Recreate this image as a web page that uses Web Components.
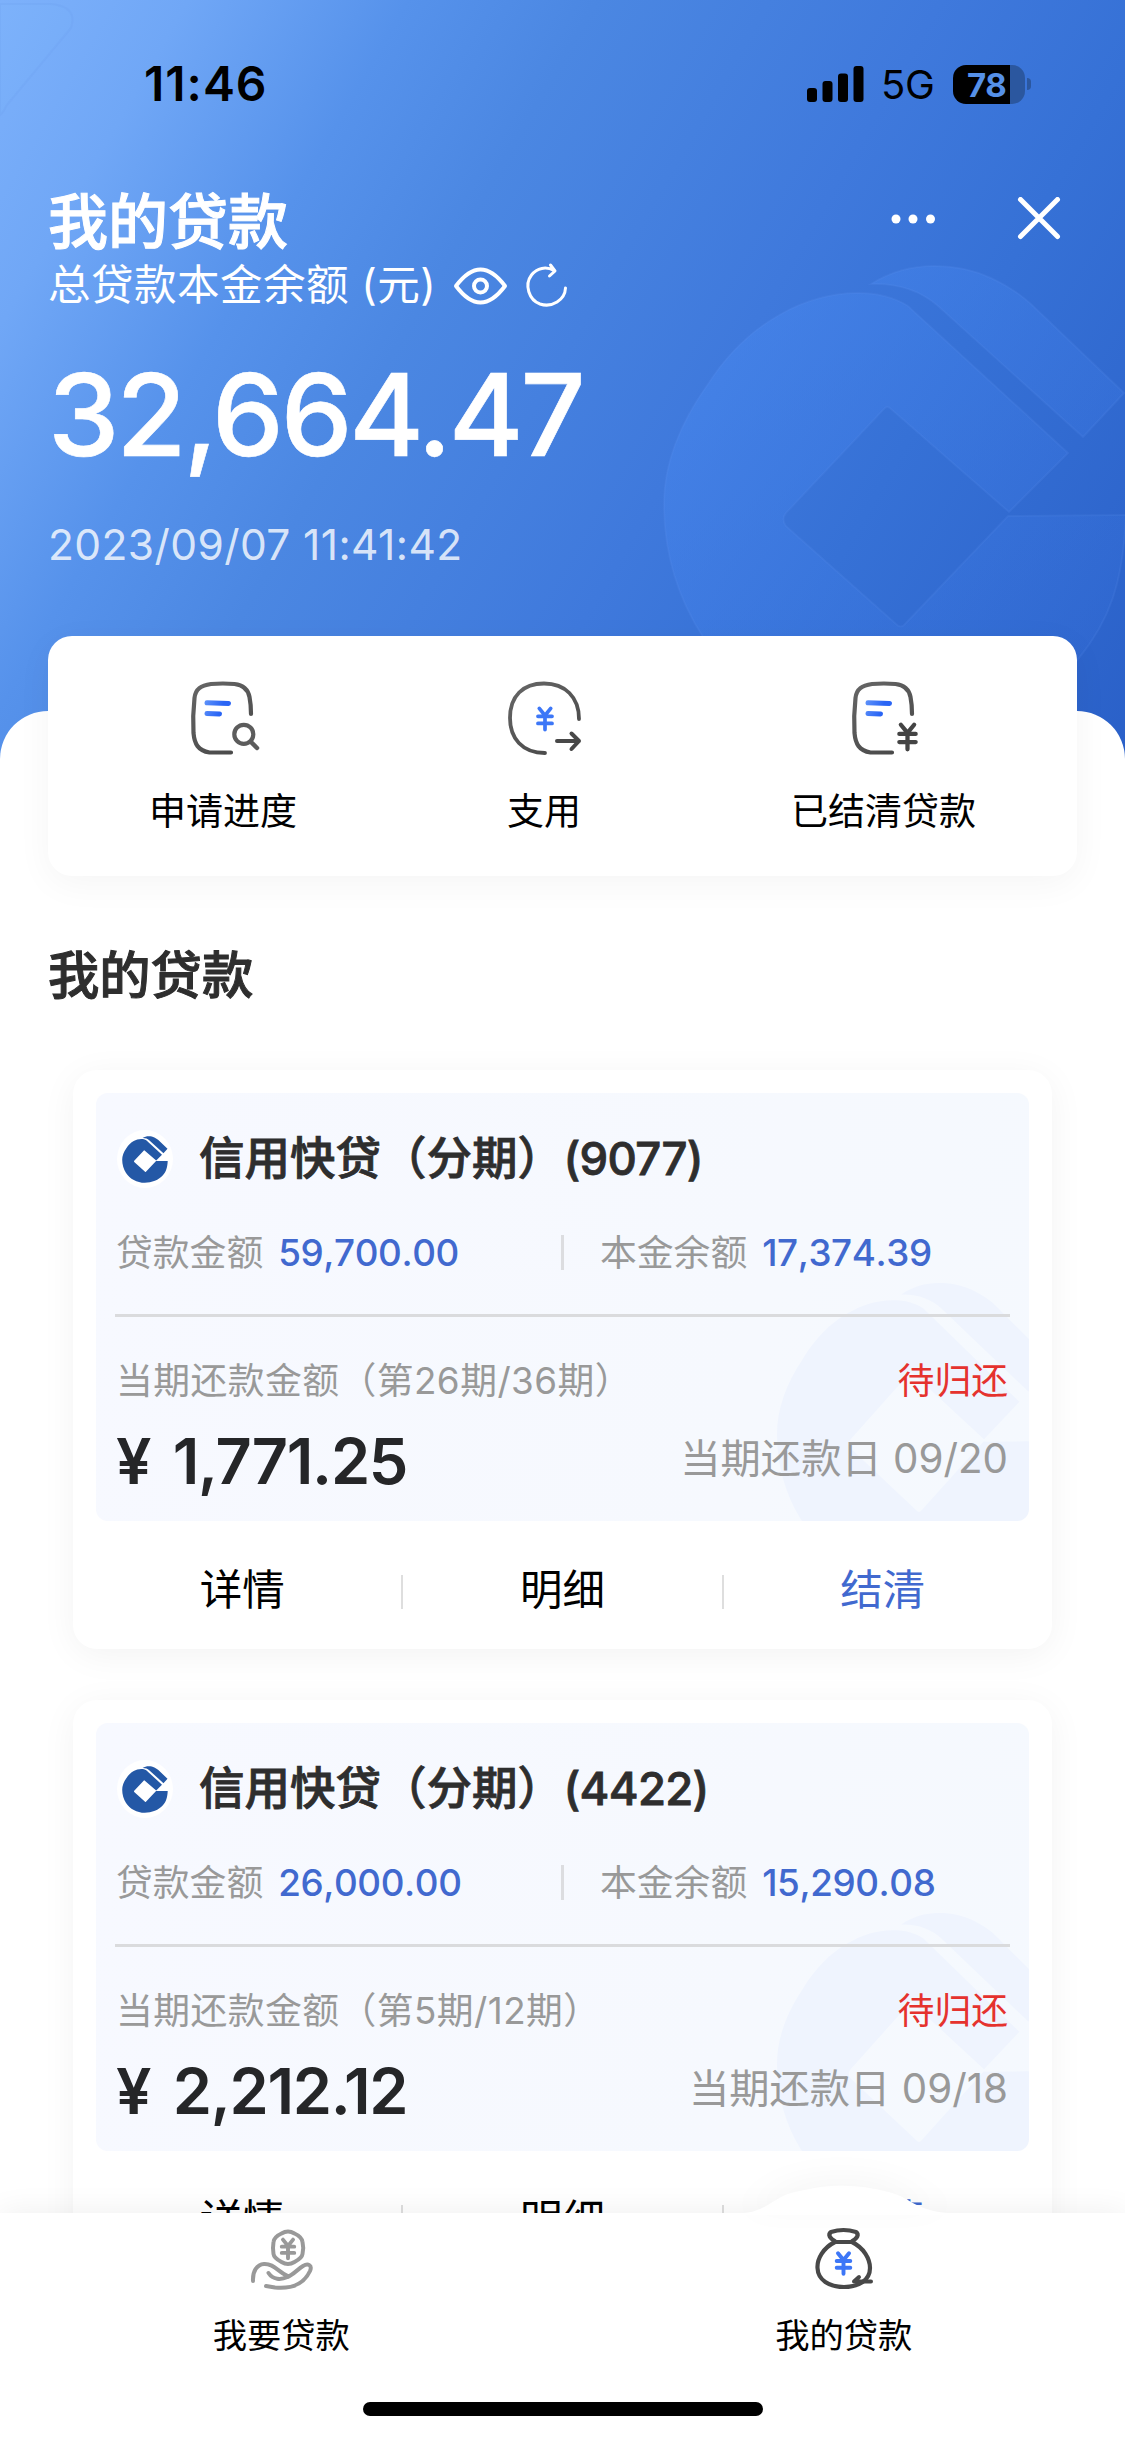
<!DOCTYPE html>
<html lang="zh-CN">
<head>
<meta charset="utf-8">
<title>我的贷款</title>
<style>
html,body{margin:0;padding:0}
body{width:1125px;height:2439px;overflow:hidden;background:#fff;font-family:Inter,"Noto Sans CJK SC",sans-serif;color:#000}
</style>
</head>
<body>
<loan-app></loan-app>
<script>
const LOGO_MAIN='M907 305C893 296 876 292 857 292C829 292 803 300 780 313C751 329 727 352 707 383C677 425 663 465 663 503C663 552 677 597 702 636C740 695 812 735 893 735C960 735 1036 708 1078 657C1108 620 1122 583 1125 514L1007 515L904 623Q900 628 895 623L785 525Q780 518 785 512L883 408Q886 404 890 408L1008 511L1067 452Z';
const LOGO_BAND='M870 283C889 271 910 265 933 265C955 265 973 269 990 277C1005 284 1018 292 1030 303L1123 392L1082 436L937 305C920 290 897 282 870 283Z';
const def=(name,html)=>customElements.define(name,class extends HTMLElement{
  constructor(){super();this.attachShadow({mode:'open'});}
  connectedCallback(){this.shadowRoot.innerHTML=typeof html==='function'?html(this):html;}
});
const yen=(x,y,s,c,w)=>`<g transform="translate(${x} ${y}) scale(${s})" fill="none" stroke="${c}" stroke-width="${w}" stroke-linecap="round"><path d="M-6.5 -12L0 -4L6.5 -12M0 -4V12M-8 -3H8M-8 5H8"/></g>`;

def('status-bar',`<style>
:host{display:flex;height:168px;align-items:center;justify-content:space-between;padding:0 94px 0 144px;box-sizing:border-box;color:#000}
.time{font-size:48px;font-weight:600;line-height:60px;letter-spacing:1px}
.right{display:flex;align-items:center}
.net{font-size:40px;line-height:48px;margin:2px 19px 0 17px;width:53px;letter-spacing:-.3px}
.bat{display:flex;align-items:center}
.body{box-sizing:border-box;width:72px;height:39px;border-radius:13px;background:linear-gradient(90deg,#000 57px,#2b579f 57px);color:#5590e8;font-size:33px;font-weight:700;line-height:40px;padding-left:14px;letter-spacing:-.5px}
.tip{width:4px;height:12px;margin-left:2px;border-radius:0 4px 4px 0;background:#2b579f}
</style>
<span class="time">11:46</span>
<div class="right">
<svg width="57" height="36" viewBox="0 0 57 36"><rect x="0" y="22" width="10" height="14" rx="3"/><rect x="15.5" y="15" width="10" height="21" rx="3"/><rect x="31" y="7.5" width="10" height="28.5" rx="3"/><rect x="46.5" y="0" width="10" height="36" rx="3"/></svg>
<span class="net">5G</span><div class="bat"><div class="body">78</div><div class="tip"></div></div></div>`);

def('loan-header',`<style>
:host{display:block;height:711px;color:#fff}
.nav{display:flex;align-items:center;justify-content:space-between;height:78px;margin-top:12px;padding:0 63px 0 48px}
h1{margin:5px 0 0;font-size:60px;line-height:76px;font-weight:500;-webkit-text-stroke:1px #fff}
.sub{display:flex;align-items:center;height:54px;padding-left:48px;font-size:42.6px;line-height:54px;letter-spacing:.4px}
.sub span{width:386px;white-space:nowrap}
.total{margin:43px 0 0 48px;font-size:114px;line-height:120px;height:120px;font-weight:500;letter-spacing:-3.1px;-webkit-text-stroke:.6px #fff}
.date{margin:44.5px 0 0 48px;font-size:42.5px;line-height:50px;letter-spacing:.4px;color:rgba(255,255,255,.8)}
</style>
<status-bar></status-bar>
<div class="nav"><h1>我的贷款</h1>
<svg width="172" height="44" viewBox="0 0 172 44"><g fill="#fff"><circle cx="6" cy="22" r="4.5"/><circle cx="23" cy="22" r="4.5"/><circle cx="40.5" cy="22" r="4.5"/></g><path d="M130.500 2.500L167.500 39.500M167.500 2.500L130.500 39.500" stroke="#fff" stroke-width="5" stroke-linecap="round"/></svg></div>
<div class="sub"><span>总贷款本金余额 (元)</span>
<svg width="140" height="54" viewBox="0 0 140 54" fill="none" stroke="#fff" stroke-linecap="round" stroke-linejoin="round"><path d="M22 28C31 16 38 11.500 46.500 11.500S62 16 71 28C62 40 55 44.500 46.500 44.500S31 40 22 28Z" stroke-width="4"/><circle cx="46.500" cy="28" r="6.500" stroke-width="4"/><path d="M120 12.500C112 8 103 10 97.500 17C90 27 95 42 106 46C118 50 131 42 131.500 30M116.500 7L121 13L115.500 18" stroke-width="3"/></svg></div>
<div class="total">32,664.47</div>
<div class="date">2023/09/07 11:41:42</div>`);

const doc='<path d="M68 36C68 30 67.500 24 66.500 19C65 11 60 7 51.500 6Q40 5 28 6C18 7.500 12.500 11 11.500 20Q9.500 38 10.500 55C11.500 66 15 72.500 26.500 74.500H48" fill="none" stroke="url(#g)" stroke-width="4.200" stroke-linecap="round"/><path d="M24 24.800L45.500 25.500M24 35.400L36.500 36" stroke="url(#b)" stroke-width="5" stroke-linecap="round"/>';
const defs='<defs><linearGradient id="g" gradientUnits="userSpaceOnUse" x1="10" y1="5" x2="60" y2="75"><stop stop-color="#666"/><stop offset="1" stop-color="#484848"/></linearGradient><linearGradient id="b" gradientUnits="userSpaceOnUse" x1="22" y1="25" x2="48" y2="36"><stop stop-color="#5b8ff9"/><stop offset=".6" stop-color="#2a65f5"/></linearGradient></defs>';
const ICONS={
 progress:doc+'<circle cx="60.800" cy="56.300" r="9.500" fill="none" stroke="#5c5c5c" stroke-width="4.200"/><path d="M68 64L74 70" stroke="#5c5c5c" stroke-width="4.500" stroke-linecap="round"/>',
 draw:'<path d="M41 75C18 75 6 60 6 40C6 18 19 5.500 40 5.500S75 19 75 41" fill="none" stroke="url(#g)" stroke-width="3.800" stroke-linecap="round"/><path d="M53 63H75M67.500 55.500L75 63L67.500 71" fill="none" stroke="#484848" stroke-width="4" stroke-linecap="round" stroke-linejoin="round"/>'+yen(41,41,.88,'#3d77f7',4.2),
 settled:doc+yen(63.5,59,1.02,'#444',4.2)
};
def('quick-action',el=>`<style>
:host{display:flex;flex-direction:column;align-items:center;font-size:37px;line-height:50px;color:#000}
svg{margin-bottom:29px}
</style><svg width="80" height="80" viewBox="0 0 80 80">${defs}${ICONS[el.getAttribute('icon')]}</svg><slot></slot>`);

def('quick-actions',`<style>
:host{display:flex;justify-content:space-between;position:relative;box-sizing:border-box;width:1029px;height:240px;margin:0 48px;margin-top:-75px;padding:42px 101px 0;background:#fff;border-radius:24px;box-shadow:0 8px 36px rgba(0,0,0,.045)}
</style><quick-action icon="progress">申请进度</quick-action><quick-action icon="draw">支用</quick-action><quick-action icon="settled">已结清贷款</quick-action>`);

def('bank-logo',`<style>:host{display:flex;width:56px;height:58px;border-radius:50%;background:#fff;align-items:center;justify-content:center}</style>
<svg width="46" height="47" viewBox="661 263 467 474" preserveAspectRatio="none"><path fill="#2458a6" d="${LOGO_MAIN}"/><path fill="#2458a6" d="${LOGO_BAND}"/></svg>`);

def('loan-card',el=>{const a=n=>el.getAttribute(n);return `<style>
:host{display:block;box-sizing:border-box;width:979px;height:579px;padding:23.500px 23px 0;border-radius:24px;background:#fff;box-shadow:0 6px 36px rgba(0,0,0,.05)}
.panel{box-sizing:border-box;height:428px;border-radius:12px;padding:34px 19px 0;background:url("data:image/svg+xml,${encodeURIComponent(`<svg xmlns="http://www.w3.org/2000/svg" width="252" height="238" viewBox="0 0 252 238"><g fill="#eff4fe" transform="scale(.6 .635) translate(-663 -265)"><path d="${LOGO_MAIN}"/><path d="${LOGO_BAND}"/></g></svg>`)}") right bottom no-repeat,linear-gradient(100deg,#f7f9ff,#f6f9fe 70%,#f5f9fe)}
.title{display:flex;align-items:center;height:64px;font-size:45.500px;line-height:64px;font-weight:500;color:#2e2e2e;-webkit-text-stroke:.8px #2e2e2e}
.title small{font-size:inherit;letter-spacing:-.7px;margin-left:.5px}
bank-logo{margin:0 26px 0 2px}
.stats{display:flex;align-items:center;height:50px;margin-top:36.500px;font-size:36.800px;line-height:50px;color:#999}
.stats div{display:flex;box-sizing:border-box;padding-left:1px}
.stats div:first-child{width:446px}
.stats div:last-child{padding-left:36px}
.stats b{font-weight:500;color:#4169cf;margin-left:15px;font-size:36.800px;letter-spacing:-.4px;font-kerning:none}
.stats i{width:3px;height:35px;background:#dcdde0}
.rule{height:3px;margin-top:36px;background:#dadbdd}
.row{display:flex;align-items:center;justify-content:space-between;padding:0 2px 0 1px;color:#999}
.due{height:46px;margin-top:41px;font-size:36.800px;line-height:46px}
.due span{letter-spacing:.45px}
.due em{font-style:normal;color:#e5322e}
.pay{height:70px;margin-top:22.500px;font-size:40.300px;line-height:64px}
.pay b{font-size:63px;line-height:70px;font-weight:600;color:#252628;letter-spacing:-1.300px;word-spacing:8px;white-space:pre}
.pay span{margin-top:-4px}
.acts{display:flex;align-items:center;height:116px;margin:0 -14px;padding-top:11px;font-size:42.500px;line-height:60px}
.acts span{flex:1;text-align:center}
.acts i{width:2px;height:34px;margin:4px -1px 0;background:#dedede}
.acts span:last-child{color:#4169cf}
</style>
<div class="panel">
<div class="title"><bank-logo></bank-logo><span>信用快贷（分期）<small>(${a('no')})</small></span></div>
<div class="stats"><div>贷款金额<b>${a('amount')}</b></div><i></i><div>本金余额<b>${a('balance')}</b></div></div>
<div class="rule"></div>
<div class="row due"><span>当期还款金额（第${a('term')}期/${a('terms')}期）</span><em>待归还</em></div>
<div class="row pay"><b>¥ ${a('due')}</b><span>当期还款日 ${a('date')}</span></div>
</div>
<div class="acts"><span>详情</span><i></i><span>明细</span><i></i><span>结清</span></div>`});

def('loan-list',`<style>
:host{display:block}
h2{margin:65px 0 0 48px;height:69px;font-size:51.300px;line-height:69px;font-weight:500;color:#2e2e2e;-webkit-text-stroke:1px #2e2e2e}
.list{display:flex;flex-direction:column;align-items:center;gap:51px;margin-top:59.500px}
</style><h2>我的贷款</h2><div class="list">
<loan-card no="9077" amount="59,700.00" balance="17,374.39" term="26" terms="36" due="1,771.25" date="09/20"></loan-card>
<loan-card no="4422" amount="26,000.00" balance="15,290.08" term="5" terms="12" due="2,212.12" date="09/18"></loan-card></div>`);

const TABS={
 hand:'<g fill="none" stroke="#999" stroke-width="4" stroke-linecap="round" stroke-linejoin="round"><path d="M40.500 13.500Q47 9.500 53.500 13.500Q61 17 61.500 22Q63 28 61.500 34Q61 38 53.500 42Q47 46 40.500 42Q33 38 32.500 34Q31.500 28 32.500 22Q33 17 40.500 13.500Z"/><path d="M12 61C11.500 51 16 44.500 23 44C33 43.500 37 52 46 55.500M27.500 53C32 60 40 60 46.500 57C52 55 57 49 62 46C67 43 71.500 45 69 51C63 64 50 69 34 67.500L25 66"/></g>'+yen(47,29,.78,'#999',5),
 bag:'<g fill="none" stroke="#484848" stroke-width="4.200" stroke-linecap="round" stroke-linejoin="round"><path d="M32 22Q22 16 27 12Q39.500 8 52 12Q57 16 47 22Z"/><path d="M31 22C19 28 13 39 13.500 48C14 60 25 67 40 67S66 60 66 48C66 39 60 28 48 22"/><path d="M67 61.500H50L55 57" stroke-width="4"/></g>'+yen(39.5,43.500,.85,'#3d77f7',4.6)
};
def('tab-item',el=>`<style>
:host{display:flex;flex:1;flex-direction:column;align-items:center;font-size:34.300px;line-height:46px;color:#000}
svg{margin:7px 0 12.500px}
</style><svg width="80" height="80" viewBox="0 0 80 80">${TABS[el.getAttribute('icon')]}</svg><slot></slot>`);

def('tab-bar',`<style>
:host{position:absolute;left:0;bottom:0;width:1125px;height:226px;background:#fff;box-shadow:0 0 30px rgba(0,0,0,.07)}
.bump{position:absolute;left:744px;top:-28px;filter:drop-shadow(0 -8px 14px rgba(0,0,0,.035))}
.tabs{display:flex;position:relative;height:189px}
.home{position:relative;width:400px;height:14px;margin:0 auto;border-radius:7px;background:#000}
</style><svg class="bump" width="204" height="30" viewBox="0 0 204 30"><path fill="#fff" d="M0 28C25 26 30 10 56 6Q100 -5 144 7C166 12 172 26 204 28V30H0Z"/></svg>
<div class="tabs"><tab-item icon="hand">我要贷款</tab-item><tab-item icon="bag">我的贷款</tab-item></div><div class="home"></div>`);

def('loan-app',`<style>
:host{display:block;position:relative;width:1125px;height:2439px;overflow:hidden;background:linear-gradient(120deg,#7db1fb 0%,#70a7f6 12%,#5692eb 26%,#4b87e2 38%,#3f79dc 60%,#3671d6 74%,#2a60c8 100%) 0 0/1125px 770px no-repeat,#fff}
.mark{position:absolute;left:0;top:0}
loan-header{position:relative}
.sheet{display:flow-root;position:relative;background:#fff;border-radius:48px 48px 0 0;height:1728px}
</style>
<svg class="mark" width="1125" height="770" viewBox="0 0 1125 770"><defs><linearGradient id="m" gradientUnits="userSpaceOnUse" x1="690" y1="300" x2="1080" y2="680"><stop stop-color="#4a8bf2" stop-opacity=".52"/><stop offset="1" stop-color="#3a74e0" stop-opacity=".2"/></linearGradient></defs>
<g transform="translate(1 1)" fill="url(#m)" stroke="#6aa0f8" stroke-opacity=".12" stroke-width="2"><path d="${LOGO_MAIN}"/><path d="${LOGO_BAND}"/></g>
<path d="M0 4H50Q78 6 71 28L6 106Q4 112 0 115Z" fill="#8bbcff" fill-opacity=".05" stroke="#6297e8" stroke-opacity=".14" stroke-width="2"/></svg>
<loan-header></loan-header>
<div class="sheet"><quick-actions></quick-actions><loan-list></loan-list></div>
<tab-bar></tab-bar>`);
</script>
</body>
</html>
